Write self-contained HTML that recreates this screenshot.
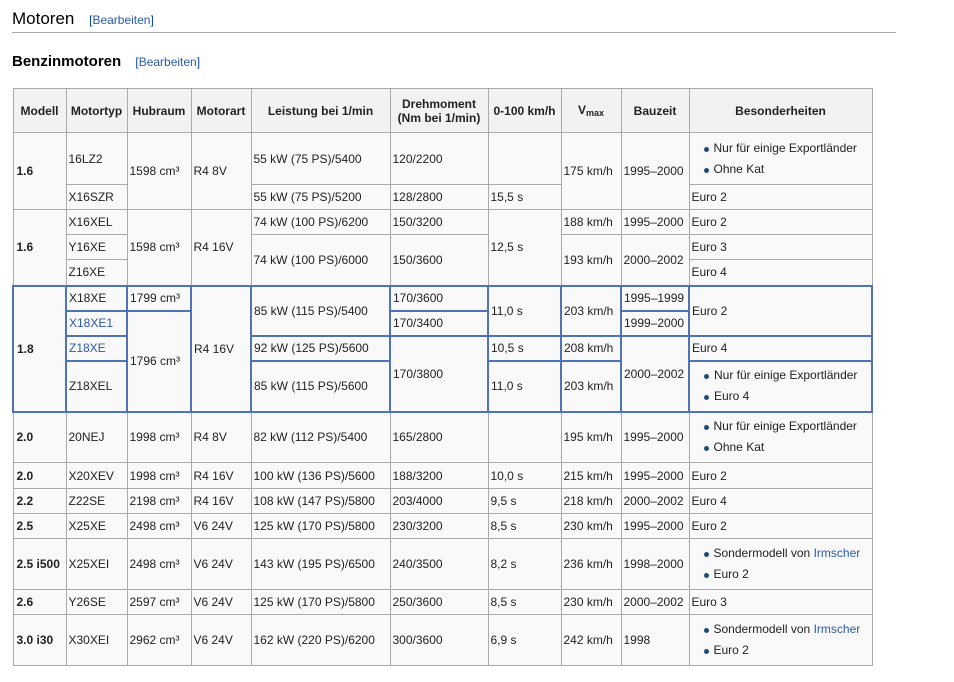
<!DOCTYPE html>
<html><head><meta charset="utf-8"><style>
body{margin:0;background:#fff;font-family:"Liberation Sans",Arial,sans-serif;color:#222;width:954px;height:682px;overflow:hidden;position:relative}
.h2{position:absolute;left:12px;top:9px;font-size:17px;color:#000}
.rule{position:absolute;left:12px;top:32px;width:884px;height:1px;background:#aaa}
.h3{position:absolute;left:12px;top:53px;font-size:15px;font-weight:bold;color:#000}
.ed{font-size:12px;font-weight:normal;color:#0645ad;margin-left:10px}
a{color:#2a5aa8;text-decoration:none}
table{position:absolute;left:12px;top:88px;border-collapse:collapse;table-layout:fixed;font-size:12px;background:#f9f9f9}
td,th{border:1px solid #aaa;padding:0 2px;vertical-align:middle;white-space:nowrap;overflow:hidden}
th{background:#f2f2f2;font-weight:bold;text-align:center;color:#222;height:43px}
td.m{font-weight:bold;padding-left:3px}
.b{border:2px solid #4f74b6}
ul{margin:0;padding:0 0 0 22px;list-style:none}
li{position:relative;line-height:21px}
li:before{content:"";position:absolute;left:-10px;top:9px;width:5px;height:5px;border-radius:50%;background:#1f4b7a}
sub{font-size:9px;vertical-align:-2px}
</style></head><body>
<div class="h2">Motoren <span class="ed">[<a>Bearbeiten</a>]</span></div>
<div class="rule"></div>
<div class="h3">Benzinmotoren <span class="ed">[<a>Bearbeiten</a>]</span></div>
<table>
<colgroup><col style="width:53px"><col style="width:61px"><col style="width:64px"><col style="width:60px"><col style="width:139px"><col style="width:98px"><col style="width:73px"><col style="width:60px"><col style="width:68px"><col style="width:183px"></colgroup>
<tr><th>Modell</th><th>Motortyp</th><th>Hubraum</th><th>Motorart</th><th>Leistung bei 1/min</th><th>Drehmoment<br>(Nm bei 1/min)</th><th>0-100 km/h</th><th>V<sub>max</sub></th><th>Bauzeit</th><th>Besonderheiten</th></tr>
<tr style="height:52px"><td class="m" rowspan="2">1.6</td><td>16LZ2</td><td rowspan="2">1598 cm³</td><td rowspan="2">R4 8V</td><td>55 kW (75 PS)/5400</td><td>120/2200</td><td></td><td rowspan="2">175 km/h</td><td rowspan="2">1995–2000</td><td><ul><li>Nur für einige Exportländer</li><li>Ohne Kat</li></ul></td></tr>
<tr style="height:25px"><td>X16SZR</td><td>55 kW (75 PS)/5200</td><td>128/2800</td><td>15,5 s</td><td>Euro 2</td></tr>
<tr style="height:25px"><td class="m" rowspan="3">1.6</td><td>X16XEL</td><td rowspan="3">1598 cm³</td><td rowspan="3">R4 16V</td><td>74 kW (100 PS)/6200</td><td>150/3200</td><td rowspan="3">12,5 s</td><td>188 km/h</td><td>1995–2000</td><td>Euro 2</td></tr>
<tr style="height:25px"><td>Y16XE</td><td rowspan="2">74 kW (100 PS)/6000</td><td rowspan="2">150/3600</td><td rowspan="2">193 km/h</td><td rowspan="2">2000–2002</td><td>Euro 3</td></tr>
<tr style="height:26px"><td>Z16XE</td><td>Euro 4</td></tr>
<tr style="height:25px"><td class="m b" rowspan="4">1.8</td><td class="b">X18XE</td><td class="b">1799 cm³</td><td class="b" rowspan="4">R4 16V</td><td class="b" rowspan="2">85 kW (115 PS)/5400</td><td class="b">170/3600</td><td class="b" rowspan="2">11,0 s</td><td class="b" rowspan="2">203 km/h</td><td class="b">1995–1999</td><td class="b" rowspan="2">Euro 2</td></tr>
<tr style="height:25px"><td class="b"><a>X18XE1</a></td><td class="b" rowspan="3">1796 cm³</td><td class="b">170/3400</td><td class="b">1999–2000</td></tr>
<tr style="height:25px"><td class="b"><a>Z18XE</a></td><td class="b">92 kW (125 PS)/5600</td><td class="b" rowspan="2">170/3800</td><td class="b">10,5 s</td><td class="b">208 km/h</td><td class="b" rowspan="2">2000–2002</td><td class="b">Euro 4</td></tr>
<tr style="height:51px"><td class="b">Z18XEL</td><td class="b">85 kW (115 PS)/5600</td><td class="b">11,0 s</td><td class="b">203 km/h</td><td class="b"><ul><li>Nur für einige Exportländer</li><li>Euro 4</li></ul></td></tr>
<tr style="height:51px"><td class="m">2.0</td><td>20NEJ</td><td>1998 cm³</td><td>R4 8V</td><td>82 kW (112 PS)/5400</td><td>165/2800</td><td></td><td>195 km/h</td><td>1995–2000</td><td><ul><li>Nur für einige Exportländer</li><li>Ohne Kat</li></ul></td></tr>
<tr style="height:26px"><td class="m">2.0</td><td>X20XEV</td><td>1998 cm³</td><td>R4 16V</td><td>100 kW (136 PS)/5600</td><td>188/3200</td><td>10,0 s</td><td>215 km/h</td><td>1995–2000</td><td>Euro 2</td></tr>
<tr style="height:25px"><td class="m">2.2</td><td>Z22SE</td><td>2198 cm³</td><td>R4 16V</td><td>108 kW (147 PS)/5800</td><td>203/4000</td><td>9,5 s</td><td>218 km/h</td><td>2000–2002</td><td>Euro 4</td></tr>
<tr style="height:25px"><td class="m">2.5</td><td>X25XE</td><td>2498 cm³</td><td>V6 24V</td><td>125 kW (170 PS)/5800</td><td>230/3200</td><td>8,5 s</td><td>230 km/h</td><td>1995–2000</td><td>Euro 2</td></tr>
<tr style="height:51px"><td class="m">2.5 i500</td><td>X25XEI</td><td>2498 cm³</td><td>V6 24V</td><td>143 kW (195 PS)/6500</td><td>240/3500</td><td>8,2 s</td><td>236 km/h</td><td>1998–2000</td><td><ul><li>Sondermodell von <a>Irmscher</a></li><li>Euro 2</li></ul></td></tr>
<tr style="height:25px"><td class="m">2.6</td><td>Y26SE</td><td>2597 cm³</td><td>V6 24V</td><td>125 kW (170 PS)/5800</td><td>250/3600</td><td>8,5 s</td><td>230 km/h</td><td>2000–2002</td><td>Euro 3</td></tr>
<tr style="height:51px"><td class="m">3.0 i30</td><td>X30XEI</td><td>2962 cm³</td><td>V6 24V</td><td>162 kW (220 PS)/6200</td><td>300/3600</td><td>6,9 s</td><td>242 km/h</td><td>1998</td><td><ul><li>Sondermodell von <a>Irmscher</a></li><li>Euro 2</li></ul></td></tr>
</table>
</body></html>
